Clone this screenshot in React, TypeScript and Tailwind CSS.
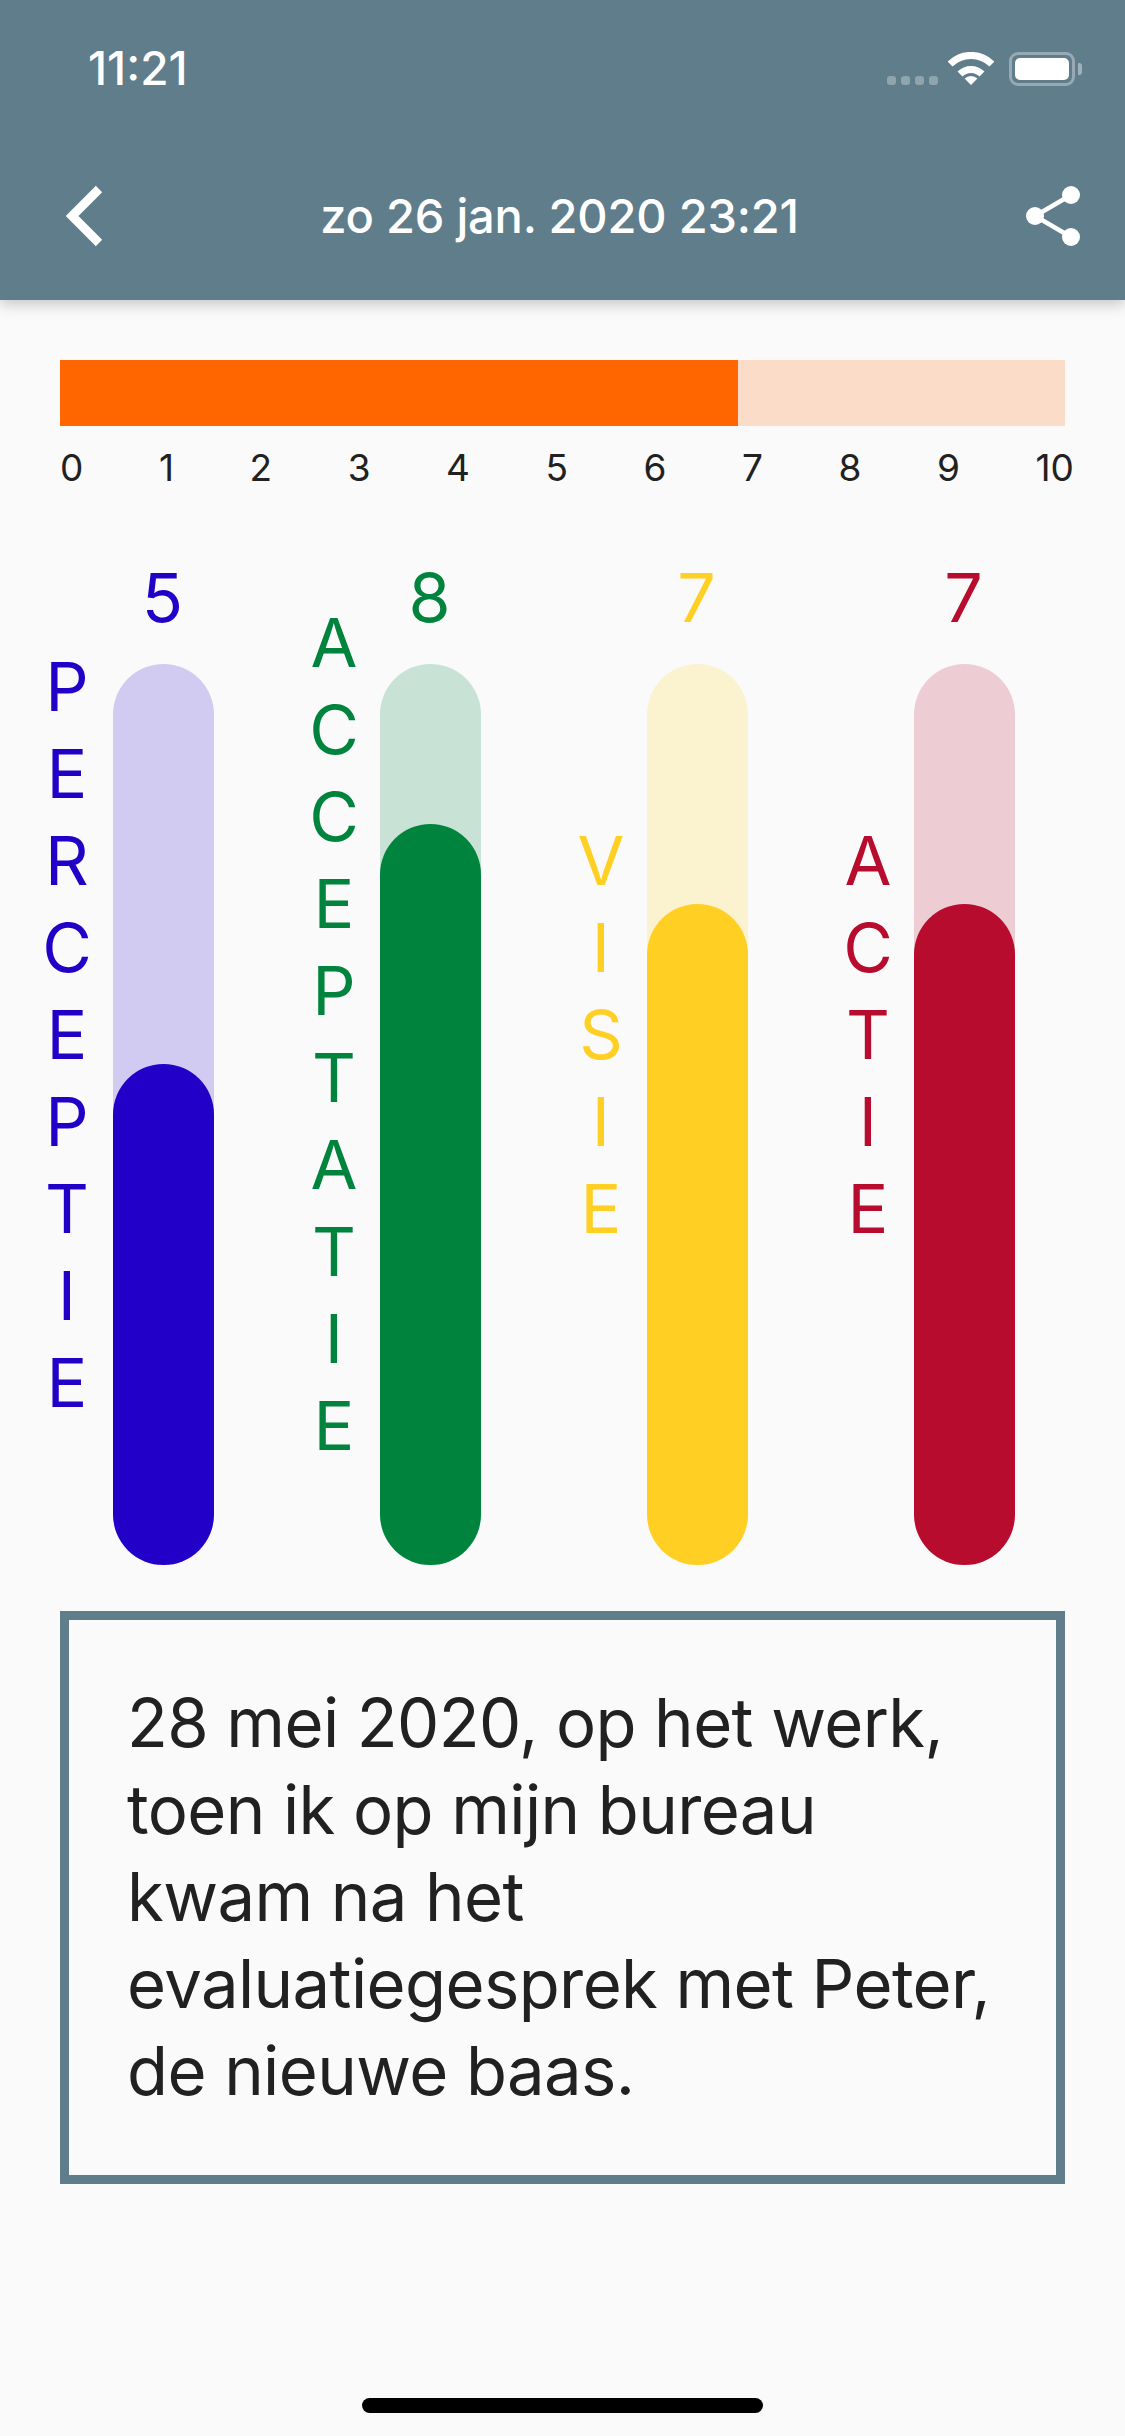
const scales = [
  { label: "PERCEPTIE", value: 5, text: "text-[#2200c8]", track: "bg-[#d1cbf2]", fill: "bg-[#2200c8]" },
  { label: "ACCEPTATIE", value: 8, text: "text-[#00843d]", track: "bg-[#c8e3d5]", fill: "bg-[#00843d]" },
  { label: "VISIE", value: 7, text: "text-[#ffcf24]", track: "bg-[#fbf3d0]", fill: "bg-[#ffcf24]" },
  { label: "ACTIE", value: 7, text: "text-[#b80c2f]", track: "bg-[#eeccd4]", fill: "bg-[#b80c2f]" },
];

const ticks = [0, 1, 2, 3, 4, 5, 6, 7, 8, 9, 10];

function StatusBar() {
  return (
    <div className="flex h-[112px] items-start justify-between pt-[42px] pl-[88px] pr-[43px]">
      <span className="text-[46px] leading-[53px] font-medium text-white">11:21</span>
      <div className="flex items-start pt-[10px]">
        <div className="mt-[24px] flex gap-[5px]">
          <div className="h-[9px] w-[9px] rounded-[3px] bg-white/30" />
          <div className="h-[9px] w-[9px] rounded-[3px] bg-white/30" />
          <div className="h-[9px] w-[9px] rounded-[3px] bg-white/30" />
          <div className="h-[9px] w-[9px] rounded-[3px] bg-white/30" />
        </div>
        <svg className="ml-[10px]" width="46" height="33" viewBox="0 0 46 33" fill="none">
          <path d="M2.1 12.1 A29.5 29.5 0 0 1 43.9 12.1" stroke="white" strokeWidth="7" />
          <path d="M12 22 A15.5 15.5 0 0 1 34 22" stroke="white" strokeWidth="7" />
          <path d="M23 33 L16.6 26.6 A9 9 0 0 1 29.4 26.6 Z" fill="white" />
        </svg>
        <div className="ml-[15px] flex h-[34px] w-[66px] items-center justify-center rounded-[9px] border-[3px] border-white/35 p-[3px]">
          <div className="h-full w-full rounded-[5px] bg-white" />
        </div>
        <div className="mt-[11px] ml-[3px] h-[12px] w-[4px] rounded-r-[3px] bg-white/40" />
      </div>
    </div>
  );
}

function Header() {
  return (
    <header className="relative h-[300px] bg-[#607d8b] shadow-[0_4px_14px_rgba(0,0,0,0.22)]">
      <StatusBar />
      <div className="flex h-[188px] items-start justify-between pt-[74px] pl-[66px] pr-[45px]">
        <svg width="38" height="60" viewBox="0 0 38 60" fill="none">
          <path d="M33 3 L6 30 L33 57" stroke="white" strokeWidth="9" />
        </svg>
        <span className="pr-[11px] text-[47px] leading-[60px] font-medium tracking-[-0.2px] text-white">zo 26 jan. 2020 23:21</span>
        <svg width="54" height="60" viewBox="0 0 54 60" fill="white">
          <path d="M45 9 L9 30 L45 51" stroke="white" strokeWidth="4.5" fill="none" />
          <circle cx="45" cy="9" r="9" />
          <circle cx="9" cy="30" r="9" />
          <circle cx="45" cy="51" r="9" />
        </svg>
      </div>
    </header>
  );
}

export default function App() {
  return (
    <div className="flex h-[2436px] w-[1125px] flex-col overflow-hidden bg-[#fafafa] font-['Inter',sans-serif]">
      <Header />

      <div className="mx-[60px] mt-[60px] h-[66px] bg-[#fbdcc8]">
        <div className="h-full w-[678px] bg-[#ff6600]" />
      </div>
      <div className="mt-[19px] mr-[51px] ml-[60px] flex justify-between text-[37px] leading-[45px] text-[#212121]">
        {ticks.map((tick) => (
          <span key={tick}>{tick}</span>
        ))}
      </div>

      {/* de vier balken */}
      <div className="mt-[17px] flex h-[1058px] pl-[32px]">
        {scales.map((scale) => (
          <div key={scale.label} className="flex w-[267px]">
            <div className={`ml-[3px] -mr-[3px] flex w-[64px] flex-col items-center justify-center pb-[4px] text-[68px] leading-[87px] ${scale.text}`}>
              {scale.label.split("").map((letter, i) => (
                <span key={i}>{letter}</span>
              ))}
            </div>
            <div className="ml-[17px] flex w-[101px] flex-col items-center justify-end">
              <span className={`mb-[23px] -ml-[2px] text-[68px] leading-[87px] ${scale.text}`}>{scale.value}</span>
              <div className={`flex h-[901px] w-full items-end rounded-full ${scale.track}`}>
                <div
                  className={`w-full rounded-full ${scale.fill}`}
                  style={{ height: 101 + scale.value * 80 }}
                />
              </div>
            </div>
          </div>
        ))}
      </div>

      <div className="mx-[60px] mt-[46px] h-[573px] border-[9px] border-[#607d8b] pt-[59px] pl-[58px] text-[67px] leading-[87px] tracking-[-0.6px] text-[#212121]">
        <p className="w-[870px]">
          28 mei 2020, op het werk, toen ik op mijn bureau kwam na het evaluatiegesprek met Peter, de nieuwe baas.
        </p>
      </div>

      <div className="mt-[214px] ml-[362px] h-[15px] w-[401px] rounded-full bg-black" />
    </div>
  );
}
